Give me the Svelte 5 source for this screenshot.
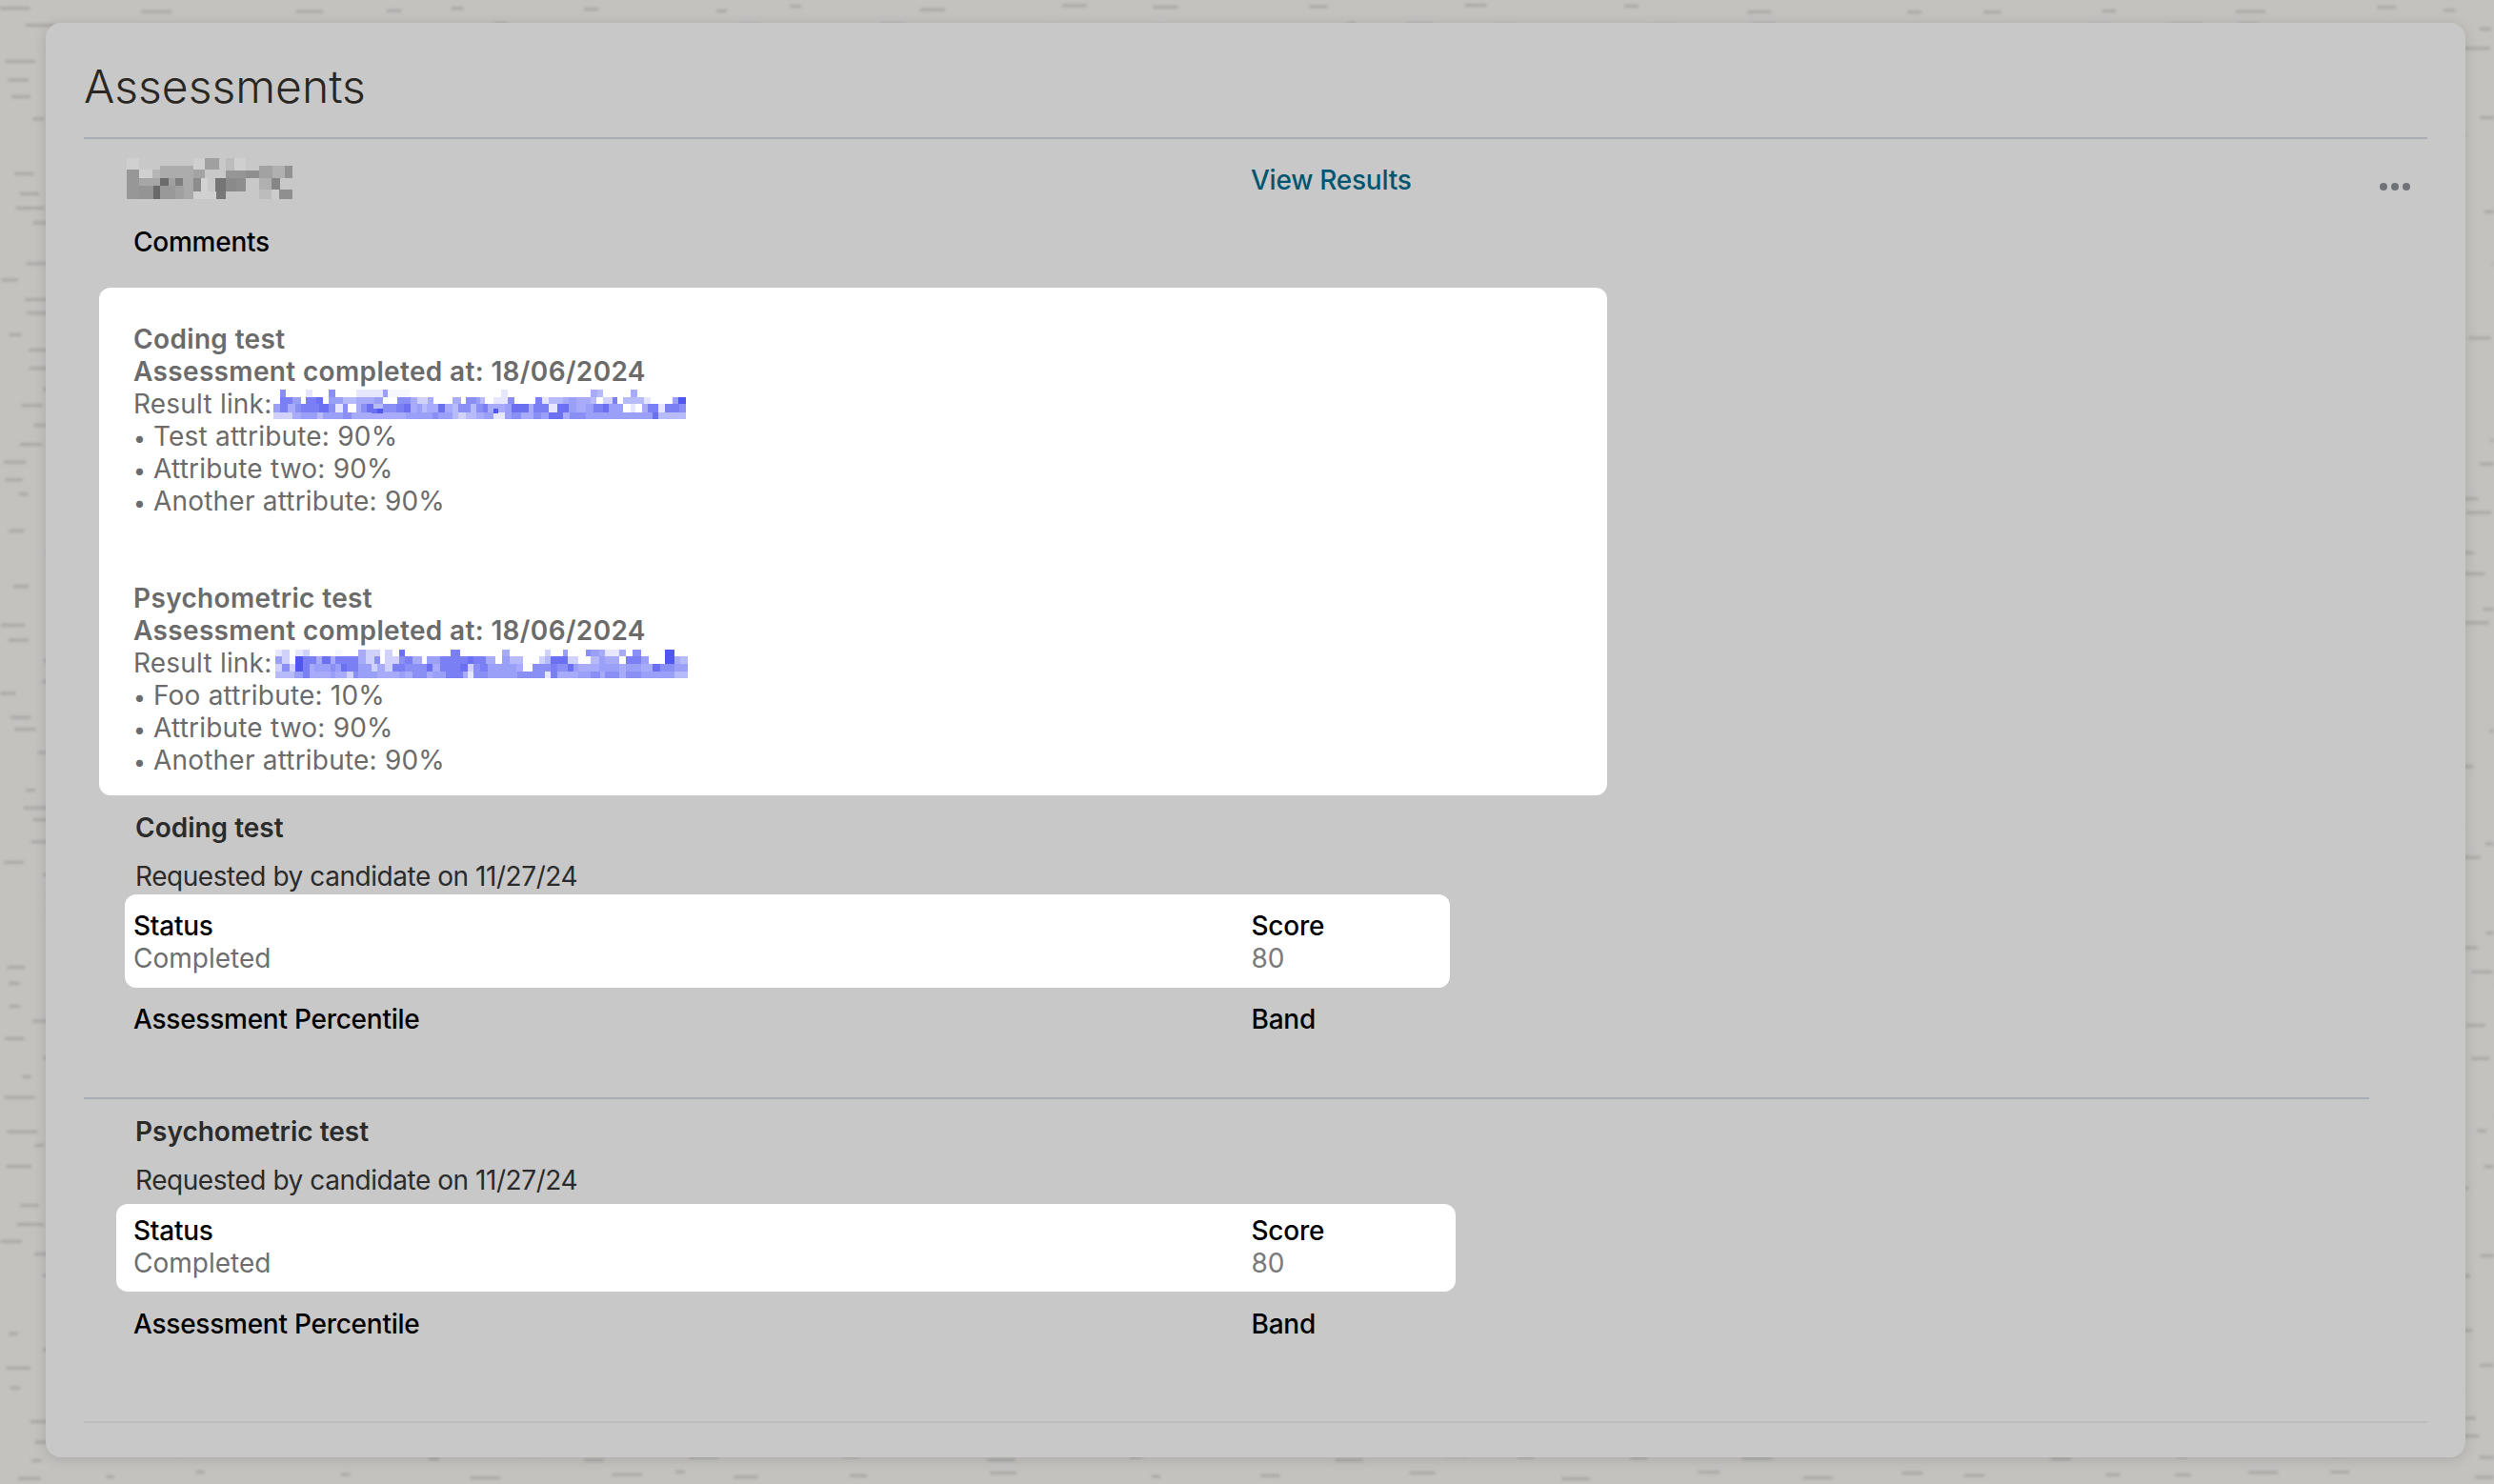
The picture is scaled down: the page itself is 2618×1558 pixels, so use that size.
<script lang="ts">
  // mosaic bars are stored as 3x coordinates, one string per row: "<end x><shade>..."
  const blues: Record<string, string> = {
    a: "#5056ee", b: "#6a70f1", c: "#7a7ff3", d: "#8a8ff5", e: "#9a9ff8",
    f: "#a8abf9", g: "#b8bbfa", h: "#d0d2fc", i: "#e6e6fe", j: "#f7f7ff"
  };

  type Row = { y0: number; y1: number; start: number; cells: string };

  const firstLink: Row[] = [
    { y0: 21, y1: 45, start: 21, cells: "42w60d123w144i195w216d282w366i381e450j738w759i1020w1041f1059g1146w1167f1320w" },
    { y0: 45, y1: 66, start: 21, cells: "42w81c108e123w156c177b195w240e282g339f366e411w453d474f507h525f585w612f627w660d672e687g714w759i780d846w867c888i933g951f975e1020f1038g1059w1089h1104c1122w1188g1209i1278w1296e1320a" },
    { y0: 66, y1: 93, start: 21, cells: "42e66c90f108d126c165c195b216d240i255d282w297f315d336b366g408d432c453b474f489e504g522f540f561b585f603g642d660g681d696c723f750f771e825b840f888c915i951b975e1005f1029e1059c1077b1122e1146w1161i1182w1200f1233c1254i1299c1320d" },
    { y0: 93, y1: 114, start: 21, cells: "81h108f159e177g240e267d330f438f522e540d585e603g627h660g684f714e750i771e801d840f864d888e933b954f1005d1146e1215e1233b1254g1320g" },
    { y0: 81, y1: 96, start: 330, cells: "348b366a714w729a" }
  ];

  const secondLink: Row[] = [
    { y0: 24, y1: 45, start: 27, cells: "48i72h90w114i135h216w237j288w312f357h372w396h417w435b579w609c741w765f876w894h933w948e1005w1020d1047e1065f1110i1131f1152w1179d1254w1284a1326w" },
    { y0: 45, y1: 69, start: 27, cells: "48e72h90w114a156c174f201b216f288c312f339h357d372w396h417h435d459c489f504w546e609c633c651b690c720f741w765e807g858w876h894g948b966h981h1020w1047g1065e1110f1131w1179c1203e1254w1284a1302f1326g" },
    { y0: 69, y1: 93, start: 27, cells: "48h72d90h114a135c150f201e216d234e252b288c330e348h372f396h435c459d504d522b546f609c633b651h672d696c720e786e807f837w894d915c948d966b981e1047f1065e1110e1131f1179e1215f1239b1284d1326e" },
    { y0: 93, y1: 114, start: 27, cells: "87g114e135c201f216e252f273h288d348e417f435e459f504d522f564e618c633f651i696d723e789e876d894i915c981f1020e1050d1065f1110d1131f1179d1284e1326g" }
  ];

  function rowRects(rows: Row[]) {
    const rects: { x: number; y: number; w: number; h: number; fill: string }[] = [];
    for (const row of rows) {
      let x = row.start;
      for (const [, end, key] of row.cells.matchAll(/(\d+)([a-z])/g)) {
        const next = Number(end);
        if (key !== "w" && next > x) {
          rects.push({ x, y: row.y0, w: next - x, h: row.y1 - row.y0, fill: blues[key] });
        }
        x = Math.max(x, next);
      }
    }
    return rects;
  }

  const firstBar = rowRects(firstLink);
  const secondBar = rowRects(secondLink);

  const nameBlocks: [number, number, number, number, string][] = [
    [15, 54, 18, 54, "#d0d0d0"], [225, 261, 18, 54, "#cfcfcf"], [261, 306, 18, 54, "#a0a0a0"],
    [327, 354, 18, 57, "#bcbcbc"], [354, 390, 18, 57, "#cfcfcf"], [15, 54, 54, 147, "#979797"],
    [54, 96, 54, 81, "#d0d0d0"], [96, 120, 54, 81, "#b5b5b5"], [120, 225, 42, 81, "#acacac"],
    [225, 261, 54, 81, "#a3a3a3"], [327, 390, 57, 81, "#969696"], [390, 432, 57, 81, "#8f8f8f"],
    [432, 474, 42, 81, "#a2a2a2"], [474, 513, 42, 81, "#b0b0b0"], [513, 537, 42, 81, "#929292"],
    [54, 120, 81, 105, "#a6a6a6"], [120, 147, 81, 105, "#6c6c6c"], [147, 168, 81, 105, "#a0a0a0"],
    [168, 192, 81, 105, "#7e7e7e"], [192, 225, 81, 105, "#aaaaaa"], [225, 249, 81, 123, "#8c8c8c"],
    [249, 270, 81, 147, "#d2d2d2"], [294, 327, 81, 123, "#757575"], [327, 360, 81, 123, "#8a8a8a"],
    [360, 390, 81, 123, "#8e8e8e"], [432, 471, 81, 117, "#b0b0b0"], [471, 498, 81, 117, "#868686"],
    [54, 99, 105, 147, "#949494"], [99, 120, 105, 147, "#696969"], [120, 168, 105, 147, "#999999"],
    [168, 195, 105, 147, "#a0a0a0"], [195, 225, 105, 147, "#a9a9a9"], [225, 297, 123, 147, "#d0d0d0"],
    [297, 327, 123, 147, "#777777"], [432, 471, 117, 147, "#bcbcbc"], [471, 495, 117, 147, "#cccccc"],
    [495, 537, 117, 147, "#8f8f8f"]
  ];

  // the page behind the dimmed card is a blurred sheet of text
  let seed = 41;
  const rand = () => (seed = (seed * 16807) % 2147483647) / 2147483647;
  const dashes: { x: number; y: number; w: number }[] = [];
  for (let y = 4; y < 1558; y += 19) {
    for (let x = rand() * 60; x < 2618; x += 60 + rand() * 110) {
      dashes.push({ x, y: y + rand() * 8, w: 8 + rand() * 24 });
    }
  }

  const reports = [
    {
      title: "Coding test",
      bar: firstBar,
      attrs: ["Test attribute: 90%", "Attribute two: 90%", "Another attribute: 90%"]
    },
    {
      title: "Psychometric test",
      bar: secondBar,
      attrs: ["Foo attribute: 10%", "Attribute two: 90%", "Another attribute: 90%"]
    }
  ];

  const assessments = [
    { title: "Coding test", variant: "coding" },
    { title: "Psychometric test", variant: "psych" }
  ];
</script>

<div class="page">
  <svg class="texture" width="2618" height="1558" aria-hidden="true">
    {#each dashes as d}
      <rect x={d.x} y={d.y} width={d.w} height="3" fill="#a8a7a4" />
    {/each}
  </svg>

  <main class="card">
    <h1>Assessments</h1>

    <div class="summary">
      <svg class="name" width="184" height="50" viewBox="0 0 552 150" aria-hidden="true">
        {#each nameBlocks as [x0, x1, y0, y1, fill]}
          <rect x={x0} y={y0} width={x1 - x0} height={y1 - y0} {fill} />
        {/each}
      </svg>
      <a class="results" href="#results">View Results</a>
      <div class="more" aria-label="More"><i></i><i></i><i></i></div>
    </div>

    <p class="strong comments">Comments</p>

    <section class="report-panel">
      {#each reports as report}
        <div class="report">
          <p class="semi">{report.title}</p>
          <p class="semi">Assessment completed at: 18/06/2024</p>
          <div class="link-row">
            <span>Result link:</span>
            <svg width="442" height="40" viewBox="0 0 1326 120" aria-hidden="true">
              {#each report.bar as r}
                <rect x={r.x} y={r.y} width={r.w} height={r.h} fill={r.fill} />
              {/each}
            </svg>
          </div>
          {#each report.attrs as attr}
            <p class="attr"><span class="dot">•</span>{attr}</p>
          {/each}
        </div>
      {/each}
    </section>

    {#each assessments as item, index}
      {#if index > 0}
        <hr class="split" />
      {/if}
      <section class="assessment {item.variant}">
        <h2>{item.title}</h2>
        <p class="requested">Requested by candidate on 11/27/24</p>
        <div class="facts highlight">
          <div>
            <p class="strong">Status</p>
            <p class="muted">Completed</p>
          </div>
          <div>
            <p class="strong">Score</p>
            <p class="score">80</p>
          </div>
        </div>
        <div class="facts plain">
          <p class="strong">Assessment Percentile</p>
          <p class="strong">Band</p>
        </div>
      </section>
    {/each}

    <hr class="end" />
  </main>
</div>

<style>
  :global(body) {
    margin: 0;
    background: #c3c2bf;
  }

  .page {
    position: relative;
    width: 2618px;
    height: 1558px;
    overflow: hidden;
    font-family: Inter, "Liberation Sans", sans-serif;
    font-size: 28px;
    line-height: 34px;
    color: #6b6b6b;
  }

  .texture {
    position: absolute;
    inset: 0;
    filter: blur(1.5px);
  }

  .card {
    position: relative;
    box-sizing: border-box;
    width: 2540px;
    height: 1506px;
    margin-left: 48px;
    top: 24px;
    padding: 0 40px;
    background: #c8c8c8;
    border-radius: 16px;
    box-shadow: 0 2px 14px rgba(0, 0, 0, 0.13);
  }

  p {
    margin: 0;
  }

  h1 {
    margin: 0;
    height: 122px;
    box-sizing: border-box;
    padding-top: 38px;
    border-bottom: 2px solid #a9aeb4;
    font-size: 48px;
    line-height: 58px;
    font-weight: 300;
    color: #2a2723;
  }

  .summary {
    display: flex;
    box-sizing: border-box;
    height: 60px;
    padding: 26px 0 0 52px;
  }

  .name {
    margin: -12px 0 0 -12px;
    width: 184px;
    flex: none;
  }

  .results {
    margin-left: 1001px;
    color: #005670;
    font-weight: 500;
    letter-spacing: -0.25px;
    text-decoration: none;
  }

  .more {
    display: flex;
    gap: 4px;
    margin: 20px 0 0 1016px;
  }

  .more i {
    width: 8px;
    height: 8px;
    border-radius: 50%;
    background: #6f7378;
  }

  .strong {
    color: #000;
    font-weight: 500;
    letter-spacing: -0.25px;
  }

  .comments {
    padding-left: 52px;
    margin-top: 31px;
  }

  .report-panel {
    box-sizing: border-box;
    width: 1583px;
    height: 533px;
    margin: 31px 0 0 16px;
    padding: 37px 36px 20px;
    background: #fff;
    border-radius: 12px;
  }

  .report + .report {
    margin-top: 68px;
  }

  .semi {
    font-weight: 600;
    letter-spacing: 0.35px;
  }

  .attr {
    height: 34px;
    letter-spacing: 0.2px;
  }

  .dot {
    display: inline-block;
    width: 21px;
    font-size: 23px;
    line-height: 1;
  }

  .link-row {
    display: flex;
    height: 34px;
    letter-spacing: 0.2px;
  }

  .link-row span {
    flex: none;
    width: 140px;
    white-space: nowrap;
  }

  .link-row svg {
    flex: none;
    margin-top: -5px;
  }

  .assessment {
    padding-left: 52px;
  }

  .assessment h2 {
    margin: 17px 0 0;
    padding-left: 2px;
    font-size: 28px;
    line-height: 34px;
    font-weight: 600;
    color: #2b2b2b;
  }

  .requested {
    margin-top: 17px;
    padding-left: 2px;
    color: #2b2b2b;
    letter-spacing: -0.45px;
  }

  .facts {
    display: grid;
    grid-template-columns: 1173.5px 1fr;
  }

  .highlight {
    box-sizing: border-box;
    background: #fff;
    border-radius: 12px;
  }

  .coding .highlight {
    width: 1391px;
    margin: 2px 0 0 -9px;
    padding: 16px 0 14px 9px;
  }

  .psych .highlight {
    width: 1406px;
    margin: 8px 0 0 -18px;
    padding: 11px 0 13px 18px;
  }

  .muted {
    color: #6e6e6e;
  }

  .score {
    color: #7a7a7a;
  }

  .plain {
    margin-top: 16px;
  }

  .psych .plain {
    margin-top: 17px;
  }

  .split {
    width: 2399px;
    height: 2px;
    margin: 65px 0 0;
    border: 0;
    background: #a9aeb4;
  }

  .split + .assessment h2 {
    margin-top: 17px;
  }

  .end {
    height: 2px;
    margin: 85px 0 0;
    border: 0;
    background: #bcbcbc;
  }
</style>
